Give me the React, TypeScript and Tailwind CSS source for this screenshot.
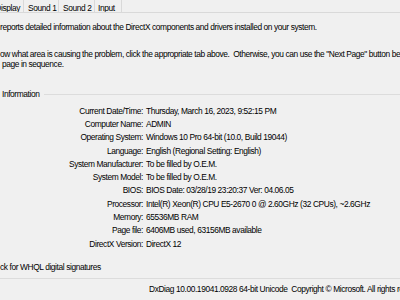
const rows: [string, string][] = [
  ["Current Date/Time:", "Thursday, March 16, 2023, 9:52:15 PM"],
  ["Computer Name:", "ADMIN"],
  ["Operating System:", "Windows 10 Pro 64-bit (10.0, Build 19044)"],
  ["Language:", "English (Regional Setting: English)"],
  ["System Manufacturer:", "To be filled by O.E.M."],
  ["System Model:", "To be filled by O.E.M."],
  ["BIOS:", "BIOS Date: 03/28/19 23:20:37 Ver: 04.06.05"],
  ["Processor:", "Intel(R) Xeon(R) CPU E5-2670 0 @ 2.60GHz (32 CPUs), ~2.6GHz"],
  ["Memory:", "65536MB RAM"],
  ["Page file:", "6406MB used, 63156MB available"],
  ["DirectX Version:", "DirectX 12"],
];

const tabs: [string, string][] = [
  ["Display", "w-[24px] flex justify-end pr-[3px]"],
  ["Sound 1", "w-[35px] pl-[4px]"],
  ["Sound 2", "w-[36px] pl-[4px]"],
  ["Input", "w-[27px] pl-[3px]"],
];

export default function App() {
  return (
    <div
      className="w-[400px] h-[300px] overflow-hidden bg-[#f0f0f0] text-[8.4px] leading-[10px] tracking-[-0.4px] text-black whitespace-nowrap"
      style={{ fontFamily: '"Liberation Sans", Arial, sans-serif' }}
    >
      <div className="flex h-[13px] border-b border-[#d9d9d9]">
        {tabs.map(([t, c]) => (
          <div key={t} className={`${c} shrink-0 pt-[3px] border-r border-[#d9d9d9] overflow-hidden`}>
            {t}
          </div>
        ))}
      </div>

      <div className="pt-[9px]">reports detailed information about the DirectX components and drivers installed on your system.</div>
      <div className="pt-[17px]">ow what area is causing the problem, click the appropriate tab above.&nbsp; Otherwise, you can use the "Next Page" button below to visit each</div>
      <div>&nbsp;page in sequence.</div>

      <div className="mt-[20px] flex items-center">
        <span className="pl-[2px] pr-[4px]">Information</span>
        <div className="flex-1 border-t border-[#dcdcdc]" />
      </div>

      <div className="mt-[5px] flex flex-col">
        {rows.map(([k, v]) => (
          <div key={k} className="flex h-[13.3px] items-center">
            <div className="w-[146px] text-right pr-[3px]">{k}</div>
            <div>{v}</div>
          </div>
        ))}
      </div>

      <div className="mt-[12px]">ck for WHQL digital signatures</div>

      <div className="mt-[6px] border-t border-[#dcdcdc] pt-[5px] pl-[149px]">
        DxDiag 10.00.19041.0928 64-bit Unicode&nbsp; Copyright © Microsoft. All rights reserved.
      </div>
    </div>
  );
}
